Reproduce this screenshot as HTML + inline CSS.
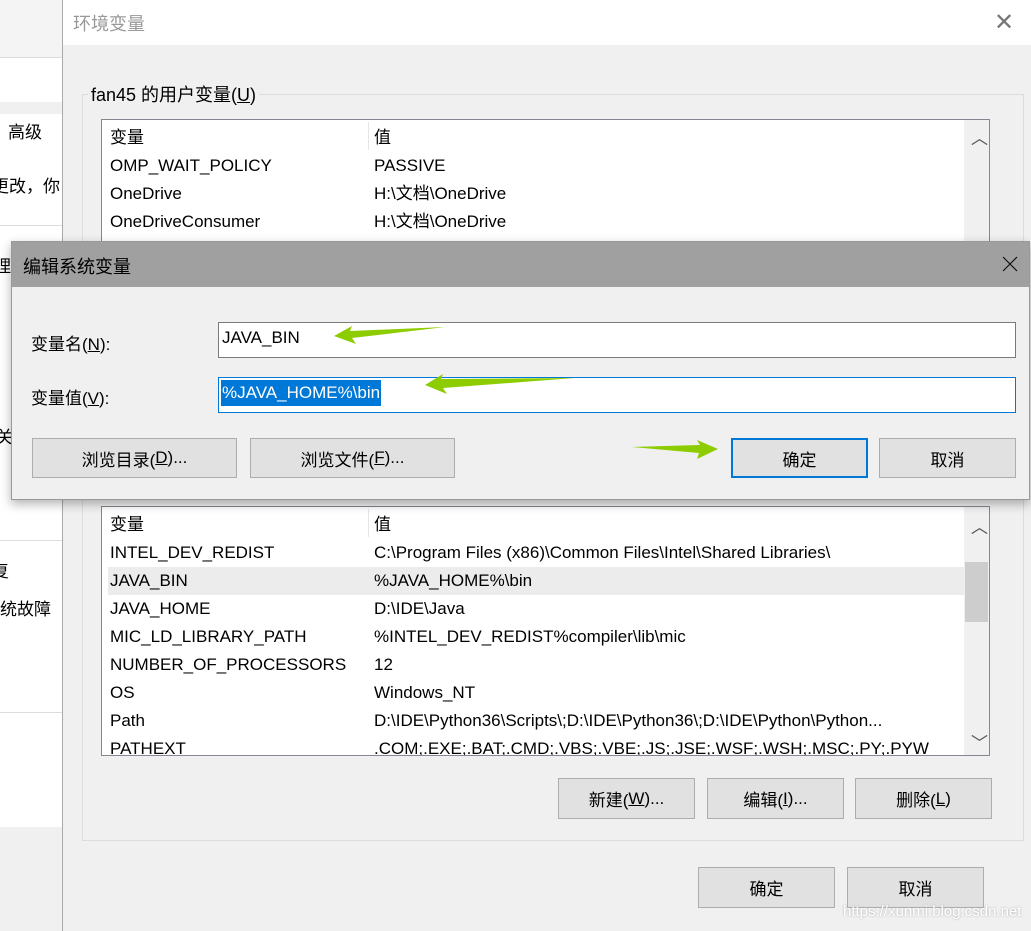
<!DOCTYPE html>
<html><head><meta charset="utf-8"><style>
*{margin:0;padding:0;box-sizing:border-box}
body{width:1031px;height:931px;overflow:hidden;position:relative;background:#f0f0f0;font-family:"Liberation Sans","Noto Sans CJK SC",sans-serif;font-size:17px;color:#000}
.a{position:absolute}
.btn{position:absolute;background:#e1e1e1;border:1px solid #adadad;display:flex;align-items:center;justify-content:center;font-size:17px}
.row{position:absolute;left:8px;height:28px;line-height:28px;white-space:nowrap}
.v{position:absolute;left:264px;white-space:nowrap}
</style></head><body>
<div class="a" style="left:0;top:0;width:62px;height:931px;background:#fff"></div>
<div class="a" style="left:0;top:0;width:62px;height:58px;background:#f4f4f4"></div>
<div class="a" style="left:0;top:57px;width:62px;height:1px;background:#ddd"></div>
<div class="a" style="left:0;top:102px;width:62px;height:12px;background:#f0f0f0"></div>
<div class="a" style="left:8px;top:118px">高级</div>
<div class="a" style="left:-8px;top:172px">更改，你</div>
<div class="a" style="left:0;top:225px;width:62px;height:1px;background:#ddd"></div>
<div class="a" style="left:-6px;top:252px">理</div>
<div class="a" style="left:-4px;top:423px">关</div>
<div class="a" style="left:0;top:540px;width:62px;height:1px;background:#ddd"></div>
<div class="a" style="left:-8px;top:557px">复</div>
<div class="a" style="left:0;top:595px;white-space:nowrap">统故障</div>
<div class="a" style="left:0;top:712px;width:62px;height:1px;background:#ddd"></div>
<div class="a" style="left:0;top:827px;width:62px;height:104px;background:#f0f0f0"></div>
<div class="a" style="left:62px;top:0;width:969px;height:931px;background:#f0f0f0;border-left:1px solid #aaa"></div>
<div class="a" style="left:63px;top:0;width:968px;height:45px;background:#fff"></div>
<div class="a" style="left:73px;top:10px;color:#999;font-size:18px">环境变量</div>
<div class="a" style="left:994px;top:8px;color:#777;font-size:24px;font-weight:300">✕</div>
<div class="a" style="left:82px;top:94px;width:942px;height:747px;border:1px solid #dcdcdc"></div>
<div class="a" style="left:88px;top:81px;background:#f0f0f0;padding:0 3px;font-size:18px">fan45 的用户变量(<u>U</u>)</div>
<div class="a" style="left:101px;top:119px;width:889px;height:125px;background:#fff;border:1px solid #828790;overflow:hidden">
 <div class="a" style="left:266px;top:2px;width:1px;height:28px;background:#e5e5e5"></div>
 <div class="a" style="left:862px;top:0;width:25px;height:125px;background:#f0f0f0"></div>
 <div class="a" style="left:869px;top:4px;color:#555">︿</div>
 <div class="row" style="top:4px">变量<span class="v">值</span></div>
 <div class="row" style="top:32px">OMP_WAIT_POLICY<span class="v">PASSIVE</span></div>
 <div class="row" style="top:60px">OneDrive<span class="v">H:\文档\OneDrive</span></div>
 <div class="row" style="top:88px">OneDriveConsumer<span class="v">H:\文档\OneDrive</span></div>
</div>
<div class="a" style="left:101px;top:506px;width:889px;height:250px;background:#fff;border:1px solid #828790;overflow:hidden">
 <div class="a" style="left:266px;top:2px;width:1px;height:28px;background:#e5e5e5"></div>
 <div class="a" style="left:6px;top:60px;width:856px;height:28px;background:#ececec"></div>
 <div class="a" style="left:862px;top:0;width:25px;height:250px;background:#f0f0f0"></div>
 <div class="a" style="left:863px;top:55px;width:23px;height:60px;background:#cdcdcd"></div>
 <div class="a" style="left:869px;top:6px;color:#555">︿</div>
 <div class="a" style="left:869px;top:222px;color:#555">﹀</div>
 <div class="row" style="top:4px">变量<span class="v">值</span></div>
 <div class="row" style="top:32px">INTEL_DEV_REDIST<span class="v">C:\Program Files (x86)\Common Files\Intel\Shared Libraries\</span></div>
 <div class="row" style="top:60px">JAVA_BIN<span class="v">%JAVA_HOME%\bin</span></div>
 <div class="row" style="top:88px">JAVA_HOME<span class="v">D:\IDE\Java</span></div>
 <div class="row" style="top:116px">MIC_LD_LIBRARY_PATH<span class="v">%INTEL_DEV_REDIST%compiler\lib\mic</span></div>
 <div class="row" style="top:144px">NUMBER_OF_PROCESSORS<span class="v">12</span></div>
 <div class="row" style="top:172px">OS<span class="v">Windows_NT</span></div>
 <div class="row" style="top:200px">Path<span class="v">D:\IDE\Python36\Scripts\;D:\IDE\Python36\;D:\IDE\Python\Python...</span></div>
 <div class="row" style="top:228px">PATHEXT<span class="v">.COM;.EXE;.BAT;.CMD;.VBS;.VBE;.JS;.JSE;.WSF;.WSH;.MSC;.PY;.PYW</span></div>
</div>
<div class="btn" style="left:558px;top:778px;width:137px;height:41px">新建(<u>W</u>)...</div>
<div class="btn" style="left:707px;top:778px;width:137px;height:41px">编辑(<u>I</u>)...</div>
<div class="btn" style="left:855px;top:778px;width:137px;height:41px">删除(<u>L</u>)</div>
<div class="btn" style="left:698px;top:867px;width:137px;height:41px">确定</div>
<div class="btn" style="left:847px;top:867px;width:137px;height:41px">取消</div>
<div class="a" style="left:843px;top:903px;color:#fff;font-size:15px;text-shadow:0 0 2px #aaa">https://xunmi.blog.csdn.net</div>
<div class="a" style="left:11px;top:241px;width:1019px;height:259px;background:#f0f0f0;border:1px solid #999;box-shadow:0 4px 10px rgba(0,0,0,.3)"></div>
<div class="a" style="left:12px;top:242px;width:1017px;height:45px;background:#a0a0a0"></div>
<div class="a" style="left:23px;top:253px;font-size:18px">编辑系统变量</div>
<svg class="a" style="left:1002px;top:256px" width="16" height="16"><path d="M1 1L15 15M15 1L1 15" stroke="#111" stroke-width="1.2"/></svg>
<div class="a" style="left:31px;top:330px">变量名(<u>N</u>):</div>
<div class="a" style="left:31px;top:384px">变量值(<u>V</u>):</div>
<div class="a" style="left:218px;top:322px;width:798px;height:36px;background:#fff;border:1px solid #7a7a7a"></div>
<div class="a" style="left:222px;top:328px">JAVA_BIN</div>
<div class="a" style="left:218px;top:377px;width:798px;height:36px;background:#fff;border:1px solid #0078d7"></div>
<div class="a" style="left:221px;top:380px;height:26px;line-height:26px;background:#0078d7;color:#fff;padding:0 1px">%JAVA_HOME%\bin</div>
<div class="btn" style="left:32px;top:438px;width:205px;height:40px">浏览目录(<u>D</u>)...</div>
<div class="btn" style="left:250px;top:438px;width:205px;height:40px">浏览文件(<u>F</u>)...</div>
<div class="btn" style="left:731px;top:438px;width:137px;height:40px;border:2px solid #0078d7">确定</div>
<div class="btn" style="left:879px;top:438px;width:137px;height:40px">取消</div>
<svg class="a" style="left:0;top:0" width="1031" height="931">
<polygon points="334,336 352,326 350,331 445,327 352,338 356,344" fill="#8ccc00"/>
<polygon points="425,385 443,374 441,379 575,378 443,388 447,394" fill="#8ccc00"/>
<polygon points="632,447 700,445 697,440 718,449 697,459 699,453" fill="#8ccc00"/>
</svg>
</body></html>
